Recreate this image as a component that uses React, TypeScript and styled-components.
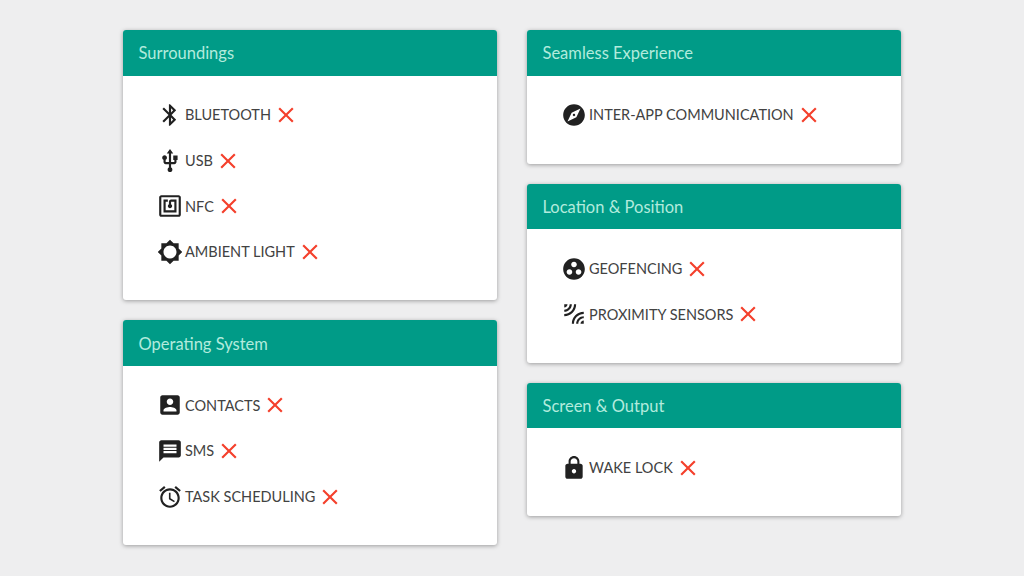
import styled, { createGlobalStyle } from 'styled-components';

const GlobalStyle = createGlobalStyle`
  html, body {
    margin: 0;
    padding: 0;
    background: #EEEEEF;
    font-family: 'Lato', 'Liberation Sans', sans-serif;
  }
`;

const Page = styled.div`
  display: grid;
  grid-template-columns: 374px 374px;
  justify-content: center;
  column-gap: 30px;
  align-items: start;
  height: 576px;
  box-sizing: border-box;
  padding-top: 30px;
  overflow: hidden;
`;

const Column = styled.div`
  display: flex;
  flex-direction: column;
  gap: 20px;
`;

const Card = styled.section`
  background: #FFFFFF;
  border-radius: 3px;
  overflow: hidden;
  box-shadow: 0 1px 4px rgba(0, 0, 0, 0.35);
`;

const CardHeader = styled.h2`
  margin: 0;
  height: 45.6px;
  padding: 1px 0 0 15.5px;
  box-sizing: border-box;
  display: flex;
  align-items: center;
  background: #009B87;
  color: #B2EBDD;
  font-size: 16.5px;
  font-weight: 400;
`;

const CardBody = styled.ul`
  margin: 0;
  list-style: none;
  padding: 16.6px 0 25.8px 33.5px;
`;

const Row = styled.li`
  display: flex;
  align-items: center;
  height: 45.6px;
  color: #424242;
  font-size: 14.5px;
`;

const Label = styled.span`
  margin-left: 2.5px;
`;

const Glyph = styled.svg`
  flex: none;
  width: 26px;
  height: 26px;
  fill: #212121;
`;

const Cross = styled(Glyph)`
  margin-left: 2px;
  fill: #F4402C;
`;

const icons = {
  bluetooth: 'M17.71 7.71L12 2h-1v7.59L6.41 5 5 6.41 10.59 12 5 17.59 6.41 19 11 14.41V22h1l5.71-5.71-4.3-4.29 4.3-4.29zM13 5.83l1.88 1.88L13 9.59V5.83zm1.88 10.46L13 18.17v-3.76l1.88 1.88z',
  usb: 'M15 7v4h1v2h-3V5h2l-3-4-3 4h2v8H8v-2.07c.7-.37 1.2-1.08 1.2-1.93 0-1.21-.99-2.2-2.2-2.2-1.21 0-2.2.99-2.2 2.2 0 .85.5 1.56 1.2 1.93V13c0 1.11.89 2 2 2h3v3.05c-.71.37-1.2 1.1-1.2 1.95 0 1.22.99 2.2 2.2 2.2 1.21 0 2.2-.98 2.2-2.2 0-.85-.49-1.58-1.2-1.95V15h3c1.11 0 2-.89 2-2v-2h1V7h-4z',
  nfc: 'M20 2H4c-1.1 0-2 .9-2 2v16c0 1.1.9 2 2 2h16c1.1 0 2-.9 2-2V4c0-1.1-.9-2-2-2zm0 18H4V4h16v16zM18 6h-5c-1.1 0-2 .9-2 2v2.28c-.6.35-1 .98-1 1.72 0 1.1.9 2 2 2s2-.9 2-2c0-.74-.4-1.38-1-1.72V8h3v8H8V8h2V6H6v12h12V6z',
  light: 'M20 15.31L23.31 12 20 8.69V4h-4.69L12 .69 8.69 4H4v4.69L.69 12 4 15.31V20h4.69L12 23.31 15.31 20H20v-4.69zM12 18c-3.31 0-6-2.69-6-6s2.69-6 6-6 6 2.69 6 6-2.69 6-6 6z',
  contacts: 'M3 5v14c0 1.1.89 2 2 2h14c1.1 0 2-.9 2-2V5c0-1.1-.9-2-2-2H5c-1.11 0-2 .9-2 2zm12 4c0 1.66-1.34 3-3 3s-3-1.34-3-3 1.34-3 3-3 3 1.34 3 3zm-9 8c0-2 4-3.1 6-3.1s6 1.1 6 3.1v1H6v-1z',
  sms: 'M20 2H4c-1.1 0-1.99.9-1.99 2L2 22l4-4h14c1.1 0 2-.9 2-2V4c0-1.1-.9-2-2-2zm-2 12H6v-2h12v2zm0-3H6V9h12v2zm0-3H6V6h12v2z',
  alarm: 'M22 5.72l-4.6-3.86-1.29 1.53 4.6 3.86L22 5.72zM7.88 3.39L6.6 1.86 2 5.71l1.29 1.53 4.59-3.85zM12.5 8H11v6l4.75 2.85.75-1.23-4-2.37V8zM12 4c-4.97 0-9 4.03-9 9s4.02 9 9 9c4.97 0 9-4.03 9-9s-4.03-9-9-9zm0 16c-3.87 0-7-3.13-7-7s3.13-7 7-7 7 3.13 7 7-3.13 7-7 7z',
  explore: 'M12 10.9c-.61 0-1.1.49-1.1 1.1s.49 1.1 1.1 1.1c.61 0 1.1-.49 1.1-1.1s-.49-1.1-1.1-1.1zM12 2C6.48 2 2 6.48 2 12s4.48 10 10 10 10-4.48 10-10S17.52 2 12 2zm2.19 12.19L6 18l3.81-8.19L18 6l-3.81 8.19z',
  geofence: 'M12 2C6.48 2 2 6.48 2 12s4.48 10 10 10 10-4.48 10-10S17.52 2 12 2zM7.8 17.4c-1.43 0-2.6-1.17-2.6-2.6s1.17-2.6 2.6-2.6 2.6 1.17 2.6 2.6-1.17 2.6-2.6 2.6zM12 10.4c-1.43 0-2.6-1.17-2.6-2.6S10.57 5.2 12 5.2s2.6 1.17 2.6 2.6-1.17 2.6-2.6 2.6zm4.2 7c-1.43 0-2.6-1.17-2.6-2.6s1.17-2.6 2.6-2.6 2.6 1.17 2.6 2.6-1.17 2.6-2.6 2.6z',
  proximity: 'M6 3H3v3c1.66 0 3-1.34 3-3zm8 0h-2c0 4.97-4.03 9-9 9v2c6.08 0 11-4.93 11-11zm-4 0H8c0 2.76-2.24 5-5 5v2c3.87 0 7-3.13 7-7zm0 18h2c0-4.97 4.03-9 9-9v-2c-6.07 0-11 4.93-11 11zm8 0h3v-3c-1.66 0-3 1.34-3 3zm-4 0h2c0-2.76 2.24-5 5-5v-2c-3.87 0-7 3.13-7 7z',
  lock: 'M18 8h-1V6c0-2.76-2.24-5-5-5S7 3.24 7 6v2H6c-1.1 0-2 .9-2 2v10c0 1.1.9 2 2 2h12c1.1 0 2-.9 2-2V10c0-1.1-.9-2-2-2zm-6 9c-1.1 0-2-.9-2-2s.9-2 2-2 2 .9 2 2-.9 2-2 2zm3.1-9H8.9V6c0-1.71 1.39-3.1 3.1-3.1 1.71 0 3.1 1.39 3.1 3.1v2z',
};

const crossPath = 'M19 6.41L17.59 5 12 10.59 6.41 5 5 6.41 10.59 12 5 17.59 6.41 19 12 13.41 17.59 19 19 17.59 13.41 12z';

type IconName = keyof typeof icons;

interface IFeature {
  icon: IconName;
  label: string;
}

interface IGroup {
  title: string;
  features: IFeature[];
}

const leftGroups: IGroup[] = [
  {
    title: 'Surroundings',
    features: [
      { icon: 'bluetooth', label: 'BLUETOOTH' },
      { icon: 'usb', label: 'USB' },
      { icon: 'nfc', label: 'NFC' },
      { icon: 'light', label: 'AMBIENT LIGHT' },
    ],
  },
  {
    title: 'Operating System',
    features: [
      { icon: 'contacts', label: 'CONTACTS' },
      { icon: 'sms', label: 'SMS' },
      { icon: 'alarm', label: 'TASK SCHEDULING' },
    ],
  },
];

const rightGroups: IGroup[] = [
  {
    title: 'Seamless Experience',
    features: [{ icon: 'explore', label: 'INTER-APP COMMUNICATION' }],
  },
  {
    title: 'Location & Position',
    features: [
      { icon: 'geofence', label: 'GEOFENCING' },
      { icon: 'proximity', label: 'PROXIMITY SENSORS' },
    ],
  },
  {
    title: 'Screen & Output',
    features: [{ icon: 'lock', label: 'WAKE LOCK' }],
  },
];

const FeatureCard = ({ title, features }: IGroup) => (
  <Card>
    <CardHeader>{title}</CardHeader>
    <CardBody>
      {features.map(({ icon, label }) => (
        <Row key={label}>
          <Glyph viewBox="0 0 24 24">
            <path d={icons[icon]} />
          </Glyph>
          <Label>{label}</Label>
          <Cross viewBox="0 0 24 24">
            <path d={crossPath} />
          </Cross>
        </Row>
      ))}
    </CardBody>
  </Card>
);

const App = () => (
  <>
    <GlobalStyle />
    <Page>
      <Column>
        {leftGroups.map((group) => (
          <FeatureCard key={group.title} {...group} />
        ))}
      </Column>
      <Column>
        {rightGroups.map((group) => (
          <FeatureCard key={group.title} {...group} />
        ))}
      </Column>
    </Page>
  </>
);

export default App;
